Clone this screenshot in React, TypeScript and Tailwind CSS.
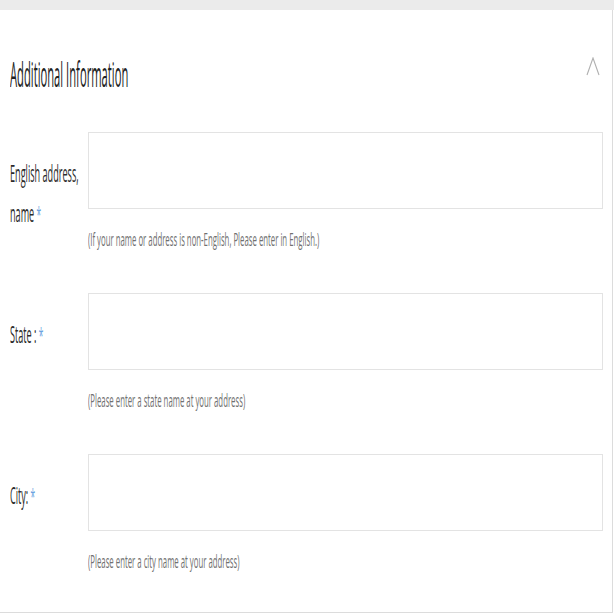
import React from 'react';

const font = { fontFamily: '"Open Sans", "Liberation Sans", sans-serif' };

interface FieldRowProps {
  label: React.ReactNode;
  hint: string;
}

// One labelled field with its hint line underneath
const FieldRow: React.FC<FieldRowProps> = ({ label, hint }) => (
  <div className="flex">
    <div className="w-[78px] shrink-0 pt-[21px]">
      <div className="origin-left scale-x-[0.38] whitespace-nowrap text-[24px] leading-[40px] text-[#2a2a2a]">
        {label}
      </div>
    </div>
    <div className="flex-1">
      <div className="h-[77px] w-[515px] border border-[#e3e3e3] bg-white" />
      <div className="mt-[18px] h-[24px] origin-left scale-x-[0.41] whitespace-nowrap text-[19px] leading-[24px] text-[#707070]">
        {hint}
      </div>
    </div>
  </div>
);

const Star = () => <span className="ml-[6px] text-[22px] text-[#6aa3e0]">*</span>;

export default function App() {
  return (
    <div className="h-[614px] w-[614px] overflow-hidden bg-white" style={font}>
      <div className="h-[10px] bg-[#ebebeb]" />
      <div className="h-[603px] w-[613px] border-r border-b border-[#dcdcdc] bg-white pl-[10px]">
        {/* Section header */}
        <div className="flex h-[122px] items-start justify-between pr-[12px] pt-[44px]">
          <div className="origin-left scale-x-[0.33] whitespace-nowrap text-[34px] leading-[40px] text-[#222]">
            Additional Information
          </div>
          <svg width="14" height="19" viewBox="0 0 14 19" className="mt-[3px]">
            <polyline points="1,18 7,1 13,18" fill="none" stroke="#b0b0b0" strokeWidth="1.1" />
          </svg>
        </div>

        <div className="flex flex-col gap-[42px]">
          <FieldRow
            label={
              <>
                English address,
                <br />
                name
                <Star />
              </>
            }
            hint="(If your name or address is non-English, Please enter in English.)"
          />
          <FieldRow
            label={
              <>
                State :<Star />
              </>
            }
            hint="(Please enter a state name at your address)"
          />
          <FieldRow
            label={
              <>
                City:<Star />
              </>
            }
            hint="(Please enter a city name at your address)"
          />
        </div>
      </div>
    </div>
  );
}
